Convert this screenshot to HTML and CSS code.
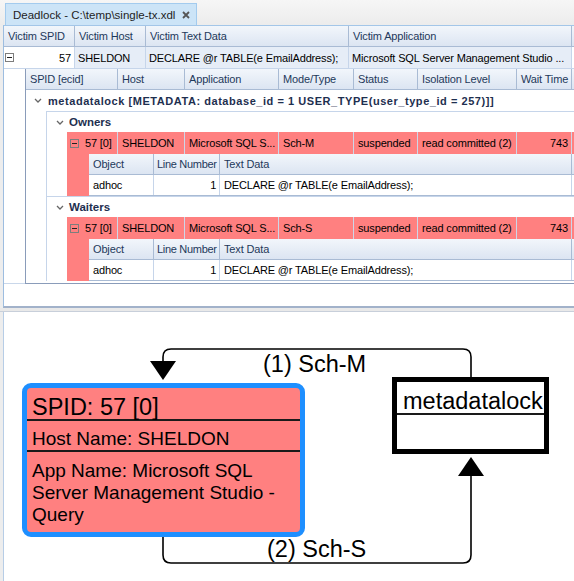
FILE: index.html
```html
<!DOCTYPE html>
<html lang="en">
<head>
    <meta charset="UTF-8">
    <title>Deadlock - C:\temp\single-tx.xdl</title>
    <link rel="stylesheet" href="styles.css">
</head>
<body>
    <div class="tabstrip">
        <div class="tab">
            <span>Deadlock - C:\temp\single-tx.xdl</span>
            <svg class="close" width="8" height="8" viewBox="0 0 8 8"><path d="M1 1 L7 7 M7 1 L1 7" stroke="#555" stroke-width="1.8"/></svg>
        </div>
    </div>

    <div class="gridpanel">
        <div class="row head">
            <div class="cell w-vspid">Victim SPID</div>
            <div class="cell w-vhost">Victim Host</div>
            <div class="cell w-vtext">Victim Text Data</div>
            <div class="cell w-vapp">Victim Application</div>
            <div class="cell fill"></div>
        </div>
        <div class="row outer-data">
            <div class="cell w-vspid first"><span class="expander"></span><span>57</span></div>
            <div class="cell w-vhost">SHELDON</div>
            <div class="cell w-vtext pad6">DECLARE @r TABLE(e EmailAddress);</div>
            <div class="cell w-vapp">Microsoft SQL Server Management Studio ...</div>
            <div class="cell fill"></div>
        </div>

        <div class="detail-wrap">
            <div class="gutter"></div>
            <div class="detail">
                <div class="row head">
                    <div class="cell w-spid">SPID [ecid]</div>
                    <div class="cell w-host">Host</div>
                    <div class="cell w-app">Application</div>
                    <div class="cell w-mode">Mode/Type</div>
                    <div class="cell w-status">Status</div>
                    <div class="cell w-iso">Isolation Level</div>
                    <div class="cell w-wait">Wait Time</div>
                    <div class="cell fill"></div>
                </div>
                <div class="group-row lvl1">
                    <svg class="chev" width="8" height="5" viewBox="0 0 8 5"><path d="M1 1 L4 4 L7 1" stroke="#666" stroke-width="1.3" fill="none"/></svg>
                    metadatalock [METADATA: database_id = 1 USER_TYPE(user_type_id = 257)]]
                </div>
                <div class="group-body">
                    <div class="subgroup">
                        <div class="group-row lvl2">
                            <svg class="chev" width="8" height="5" viewBox="0 0 8 5"><path d="M1 1 L4 4 L7 1" stroke="#666" stroke-width="1.3" fill="none"/></svg>
                            Owners
                        </div>
                        <div class="proc">
                            <div class="row red">
                                <div class="cell w-pspid"><span class="expander"></span>57 [0]</div>
                                <div class="cell w-host">SHELDON</div>
                                <div class="cell w-app">Microsoft SQL S...</div>
                                <div class="cell w-mode">Sch-M</div>
                                <div class="cell w-status">suspended</div>
                                <div class="cell w-iso">read committed (2)</div>
                                <div class="cell w-wait num">743</div>
                                <div class="cell fill"></div>
                            </div>
                            <div class="inner">
                                <div class="stripe"></div>
                                <div class="inner-grid">
                                    <div class="row head">
                                        <div class="cell w-obj">Object</div>
                                        <div class="cell w-line">Line Number</div>
                                        <div class="cell w-text">Text Data</div>
                                        <div class="cell fill"></div>
                                    </div>
                                    <div class="row inner-data">
                                        <div class="cell w-obj">adhoc</div>
                                        <div class="cell w-line num">1</div>
                                        <div class="cell w-text">DECLARE @r TABLE(e EmailAddress);</div>
                                        <div class="cell fill"></div>
                                    </div>
                                </div>
                            </div>
                        </div>
                    </div>
                    <div class="subgroup">
                        <div class="group-row lvl2">
                            <svg class="chev" width="8" height="5" viewBox="0 0 8 5"><path d="M1 1 L4 4 L7 1" stroke="#666" stroke-width="1.3" fill="none"/></svg>
                            Waiters
                        </div>
                        <div class="proc">
                            <div class="row red">
                                <div class="cell w-pspid"><span class="expander"></span>57 [0]</div>
                                <div class="cell w-host">SHELDON</div>
                                <div class="cell w-app">Microsoft SQL S...</div>
                                <div class="cell w-mode">Sch-S</div>
                                <div class="cell w-status">suspended</div>
                                <div class="cell w-iso">read committed (2)</div>
                                <div class="cell w-wait num">743</div>
                                <div class="cell fill"></div>
                            </div>
                            <div class="inner">
                                <div class="stripe"></div>
                                <div class="inner-grid">
                                    <div class="row head">
                                        <div class="cell w-obj">Object</div>
                                        <div class="cell w-line">Line Number</div>
                                        <div class="cell w-text">Text Data</div>
                                        <div class="cell fill"></div>
                                    </div>
                                    <div class="row inner-data">
                                        <div class="cell w-obj">adhoc</div>
                                        <div class="cell w-line num">1</div>
                                        <div class="cell w-text">DECLARE @r TABLE(e EmailAddress);</div>
                                        <div class="cell fill"></div>
                                    </div>
                                </div>
                            </div>
                        </div>
                    </div>
                </div>
            </div>
        </div>
    </div>

    <div class="splitter"></div>

    <div class="diagram">
        <svg class="links" width="570" height="269" viewBox="0 0 570 269">
            <path d="M467 65 V45 Q467 37 459 37 H167 Q159 37 159 45 V49" stroke="#000" stroke-width="1.6" fill="none"/>
            <polygon points="146,49 172,49 159,68" fill="#000"/>
            <path d="M159 225 V243 Q159 251 167 251 H459 Q467 251 467 243 V164" stroke="#000" stroke-width="1.6" fill="none"/>
            <polygon points="454,164 480,164 467,145" fill="#000"/>
            <text x="259" y="60" class="link-label">(1) Sch-M</text>
            <text x="263" y="245" class="link-label">(2) Sch-S</text>
        </svg>

        <div class="node process">
            <div class="node-title">SPID: 57 [0]</div>
            <div class="node-host">Host Name: SHELDON</div>
            <div class="node-app">App Name: Microsoft SQL Server Management Studio - Query</div>
        </div>

        <div class="node lock">
            <div class="node-title">metadatalock</div>
        </div>
    </div>
</body>
</html>
```

FILE: styles.css
```css
body {
    margin: 0;
    width: 574px;
    height: 581px;
    overflow: hidden;
    background: #ededed;
    font-family: "Liberation Sans", Arial, sans-serif;
    font-size: 11px;
    color: #000;
}

/* document tab */
.tabstrip {
    height: 25px;
    padding-left: 5px;
    display: flex;
    align-items: flex-end;
    background: linear-gradient(#f6f6f6, #ececec);
}
.tab {
    width: 192px;
    height: 22px;
    box-sizing: border-box;
    display: flex;
    align-items: center;
    padding-left: 7px;
    background: #cce4f7;
    border: 1px solid #a3cbee;
    border-bottom: none;
    color: #1e1e1e;
    font-size: 11.5px;
}
.tab .close {
    margin-left: auto;
    margin-right: 6px;
}

/* grid */
.gridpanel {
    height: 280px;
    margin-left: 3px;
    border-left: 1px solid #9dbde0;
    border-top: 1px solid #a3c6e8;
    border-bottom: 2px solid #a2b2ca;
    background: #fff;
    overflow: hidden;
}
.row {
    display: flex;
}
.cell {
    box-sizing: border-box;
    flex: none;
    height: 100%;
    padding: 0 4px;
    border-right: 1px solid #c6d5ea;
    white-space: nowrap;
    overflow: hidden;
    display: flex;
    align-items: center;
    letter-spacing: -0.15px;
}
.cell.fill {
    flex: 1;
    border-right: none;
}
.num {
    justify-content: flex-end;
    padding-right: 3px;
}
.pad6 {
    padding-left: 6px;
}
.head {
    height: 21px;
    box-sizing: border-box;
    background: linear-gradient(#f2f6fb, #dce5f2);
    border-bottom: 1px solid #a9bbd4;
    color: #1e395b;
}
.head .cell {
    border-right-color: #a9bbd4;
}

.w-vspid { width: 71px; }
.w-vhost { width: 71px; }
.w-vtext { width: 203px; }
.w-vapp { width: 223px; }

.outer-data {
    height: 22px;
    box-sizing: border-box;
    border-bottom: 1px solid #c6d5ea;
}
.outer-data .cell {
    background: #e6edf7;
    padding-left: 3px;
}
.outer-data .first {
    background: #fff;
    padding: 0 3px 0 1px;
    justify-content: space-between;
}
.outer-data .fill {
    background: #fff;
}

.expander {
    position: relative;
    width: 9px;
    height: 9px;
    box-sizing: border-box;
    border: 1px solid #7d7d7d;
    flex: none;
}
.expander::after {
    content: "";
    position: absolute;
    left: 1px;
    top: 3px;
    width: 5px;
    height: 1px;
    background: #222;
}

.detail-wrap {
    display: flex;
    height: 215px;
}
.gutter {
    flex: none;
    width: 21px;
    border-bottom: 1px solid #c9d7ea;
}
.detail {
    flex: 1;
    min-width: 0;
    border-left: 1px solid #8a9cba;
    border-bottom: 1px solid #8a9cba;
}

.w-spid { width: 92px; }
.w-pspid { width: 51px; }
.w-host { width: 67px; }
.w-app { width: 94px; }
.w-mode { width: 75px; }
.w-status { width: 64px; }
.w-iso { width: 99px; }
.w-wait { width: 55px; }

.group-row {
    display: flex;
    align-items: center;
    font-weight: bold;
    color: #1e2f4f;
    white-space: nowrap;
}
.group-row .chev {
    flex: none;
}
.lvl1 {
    height: 21px;
    padding-left: 8px;
    gap: 6px;
    letter-spacing: 0.55px;
}
.lvl2 {
    height: 20px;
    padding-left: 9px;
    gap: 5px;
    font-size: 11.5px;
}
.group-body {
    margin-left: 20px;
    border-left: 1px solid #c6d5ea;
}
.subgroup {
    border-top: 1px solid #c6d5ea;
}
.proc {
    margin-left: 20px;
}
.red {
    height: 22px;
    background: #ff8080;
}
.red .cell {
    border-right-color: #cdd6e8;
}
.red .w-pspid {
    padding-left: 3px;
    gap: 6px;
}
.inner {
    display: flex;
    height: 42px;
}
.stripe {
    flex: none;
    width: 22px;
    background: #ff8080;
}
.inner-grid {
    flex: 1;
    min-width: 0;
}
.inner-data {
    height: 21px;
    box-sizing: border-box;
    border-bottom: 1px solid #a9bbd4;
}
.w-obj { width: 65px; }
.w-line {
    width: 66px;
    padding-left: 3px;
    letter-spacing: -0.3px;
}
.w-text { width: 352px; }

.splitter {
    height: 3px;
    background: #e9e9e9;
    border-bottom: 1px solid #c8cfda;
}

/* diagram */
.diagram {
    position: relative;
    height: 269px;
    margin-left: 3px;
    border-left: 1px solid #b7cde6;
    background: #fff;
    overflow: hidden;
}
.links {
    position: absolute;
    left: 0;
    top: 0;
}
.link-label {
    font-family: "Liberation Sans", Arial, sans-serif;
    font-size: 23.5px;
}
.node {
    position: absolute;
    box-sizing: border-box;
    border: 5px solid #000;
    background: #fff;
}
.node-title {
    font-size: 23.5px;
    white-space: nowrap;
}
.process {
    left: 18px;
    top: 71px;
    width: 283px;
    height: 154px;
    border-color: #1e8fff;
    border-radius: 9px;
    background: #ff8080;
}
.process .node-title {
    height: 33px;
    box-sizing: border-box;
    padding: 6px 0 0 5px;
    line-height: 27px;
    border-bottom: 2px solid #1a1a1a;
}
.node-host {
    height: 31px;
    box-sizing: border-box;
    padding: 4px 0 0 5px;
    line-height: 27px;
    font-size: 19px;
    border-bottom: 2px solid #1a1a1a;
}
.node-app {
    padding: 8px 4px 0 5px;
    font-size: 19px;
    line-height: 22px;
}
.lock {
    left: 388px;
    top: 65px;
    width: 157px;
    height: 77px;
}
.lock .node-title {
    height: 33px;
    box-sizing: border-box;
    padding: 6px 0 0 6px;
    line-height: 27px;
    border-bottom: 2px solid #1a1a1a;
}
```
